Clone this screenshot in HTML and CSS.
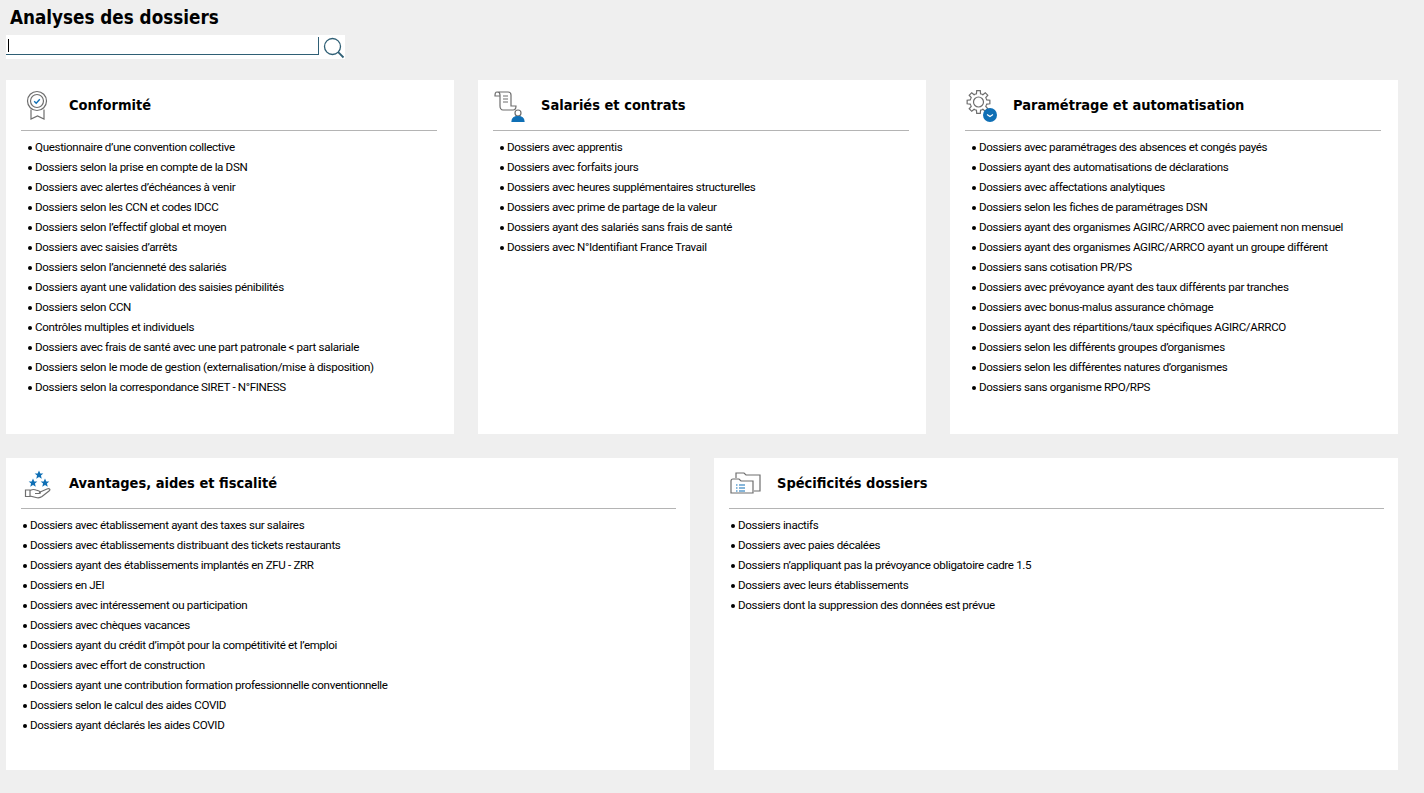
FILE: index.html
```html
<!DOCTYPE html>
<html lang="fr">
<head>
<meta charset="utf-8">
<title>Analyses des dossiers</title>
<link rel="stylesheet" href="styles.css">
</head>
<body>
<h1 class="page-title">Analyses des dossiers</h1>
<div class="search">
  <div class="search-input"><span class="caret"></span></div>
  <svg class="search-icon" width="22" height="22" viewBox="0 0 22 22" fill="none" stroke="#2f5f75"><circle cx="9.500" cy="9.500" r="8" stroke-width="1.300"/><path d="M15.200 15.200 20.500 20.500" stroke-width="1.800"/></svg>
</div>
<main class="board">
  <div class="row row-top">
    <section class="card">
      <header class="card-head">
        <svg class="icon" width="36" height="36" viewBox="0 0 36 36" fill="none" stroke="#6e6e6e" stroke-width="1.200"><circle cx="16" cy="14" r="9.500"/><circle cx="16" cy="14" r="6.500"/><path d="M13.200 14.200 15.200 16.200 18.800 12.200" stroke="#0f6fb5" stroke-width="1.400"/><path d="M10 22.500V32L16.500 29 23 32V22.500"/></svg>
        <h2>Conformité</h2>
      </header>
      <ul class="list">
        <li>Questionnaire d’une convention collective</li>
        <li>Dossiers selon la prise en compte de la DSN</li>
        <li>Dossiers avec alertes d’échéances à venir</li>
        <li>Dossiers selon les CCN et codes IDCC</li>
        <li>Dossiers selon l’effectif global et moyen</li>
        <li>Dossiers avec saisies d’arrêts</li>
        <li>Dossiers selon l’ancienneté des salariés</li>
        <li>Dossiers ayant une validation des saisies pénibilités</li>
        <li>Dossiers selon CCN</li>
        <li>Contrôles multiples et individuels</li>
        <li>Dossiers avec frais de santé avec une part patronale &lt; part salariale</li>
        <li>Dossiers selon le mode de gestion (externalisation/mise à disposition)</li>
        <li>Dossiers selon la correspondance SIRET - N°FINESS</li>
      </ul>
    </section>
    <section class="card">
      <header class="card-head">
        <svg class="icon" width="36" height="36" viewBox="0 0 36 36" fill="none" stroke="#6e6e6e" stroke-width="1.200"><path d="M4 5H15C17 5 18 6 18 8V19H23C23 21 22 23 20 23H10C8 23 7 21 7 19V8C7 6 6 5 4 5 2.500 5 2 6.500 2 9H7"/><path d="M10 9H15M10 12H15M10 15H15"/><circle cx="25" cy="26" r="3"/><path d="M19 34.500C19 31 21 29.500 25 29.500S31 31 31 34.500Z" fill="#0f6fb5" stroke="#0f6fb5"/></svg>
        <h2>Salariés et contrats</h2>
      </header>
      <ul class="list">
        <li>Dossiers avec apprentis</li>
        <li>Dossiers avec forfaits jours</li>
        <li>Dossiers avec heures supplémentaires structurelles</li>
        <li>Dossiers avec prime de partage de la valeur</li>
        <li>Dossiers ayant des salariés sans frais de santé</li>
        <li>Dossiers avec N°Identifiant France Travail</li>
      </ul>
    </section>
    <section class="card">
      <header class="card-head">
        <svg class="icon" width="36" height="36" viewBox="0 0 36 36" fill="none" stroke="#6e6e6e" stroke-width="1.200">
          <g transform="translate(13.500 15)">
            <path d="M-3.250-7.850-2.060-8.250-1.800-11.360H1.800L2.060-8.250 3.250-7.850"/>
            <path transform="rotate(45)" d="M-3.250-7.850-2.060-8.250-1.800-11.360H1.800L2.060-8.250 3.250-7.850"/>
            <path transform="rotate(90)" d="M-3.250-7.850-2.060-8.250-1.800-11.360H1.800L2.060-8.250 3.250-7.850"/>
            <path transform="rotate(135)" d="M-3.250-7.850-2.060-8.250-1.800-11.360H1.800L2.060-8.250 3.250-7.850"/>
            <path transform="rotate(180)" d="M-3.250-7.850-2.060-8.250-1.800-11.360H1.800L2.060-8.250 3.250-7.850"/>
            <path transform="rotate(225)" d="M-3.250-7.850-2.060-8.250-1.800-11.360H1.800L2.060-8.250 3.250-7.850"/>
            <path transform="rotate(270)" d="M-3.250-7.850-2.060-8.250-1.800-11.360H1.800L2.060-8.250 3.250-7.850"/>
            <path transform="rotate(315)" d="M-3.250-7.850-2.060-8.250-1.800-11.360H1.800L2.060-8.250 3.250-7.850"/>
            <circle r="5"/>
          </g>
          <circle cx="25" cy="28" r="7" fill="#0f6fb5" stroke="none"/>
          <path d="M22 27.500 25 29.500 28 27.500" stroke="#fff" stroke-width="1.200"/>
        </svg>
        <h2>Paramétrage et automatisation</h2>
      </header>
      <ul class="list">
        <li>Dossiers avec paramétrages des absences et congés payés</li>
        <li>Dossiers ayant des automatisations de déclarations</li>
        <li>Dossiers avec affectations analytiques</li>
        <li>Dossiers selon les fiches de paramétrages DSN</li>
        <li>Dossiers ayant des organismes AGIRC/ARRCO avec paiement non mensuel</li>
        <li>Dossiers ayant des organismes AGIRC/ARRCO ayant un groupe différent</li>
        <li>Dossiers sans cotisation PR/PS</li>
        <li>Dossiers avec prévoyance ayant des taux différents par tranches</li>
        <li>Dossiers avec bonus-malus assurance chômage</li>
        <li>Dossiers ayant des répartitions/taux spécifiques AGIRC/ARRCO</li>
        <li>Dossiers selon les différents groupes d’organismes</li>
        <li>Dossiers selon les différentes natures d’organismes</li>
        <li>Dossiers sans organisme RPO/RPS</li>
      </ul>
    </section>
  </div>
  <div class="row row-bottom">
    <section class="card">
      <header class="card-head">
        <svg class="icon" width="36" height="36" viewBox="0 0 36 36" fill="none" stroke="#6e6e6e" stroke-width="1.200">
          <path transform="translate(18 10) scale(1.200)" fill="#0f6fb5" stroke="none" d="M0-3.800 1.100-1.200 3.600-1.200 1.600.5 2.300 3.100 0 1.600-2.300 3.100-1.600.5-3.600-1.200-1.100-1.200Z"/>
          <path transform="translate(12 18) scale(1.200)" fill="#0f6fb5" stroke="none" d="M0-3.800 1.100-1.200 3.600-1.200 1.600.5 2.300 3.100 0 1.600-2.300 3.100-1.600.5-3.600-1.200-1.100-1.200Z"/>
          <path transform="translate(24 18) scale(1.200)" fill="#0f6fb5" stroke="none" d="M0-3.800 1.100-1.200 3.600-1.200 1.600.5 2.300 3.100 0 1.600-2.300 3.100-1.600.5-3.600-1.200-1.100-1.200Z"/>
          <path d="M4.500 25H9V31.500H4.500ZM9 25.500C11 24.500 13 24 15 25L18 26C20 26.500 20 28.500 18 28.500H14M18 27.500 26 24C28.500 23 30 24.500 28 26L21 31.500C19 33 17 33 15 32.500L9 31"/>
        </svg>
        <h2>Avantages, aides et fiscalité</h2>
      </header>
      <ul class="list">
        <li>Dossiers avec établissement ayant des taxes sur salaires</li>
        <li>Dossiers avec établissements distribuant des tickets restaurants</li>
        <li>Dossiers ayant des établissements implantés en ZFU - ZRR</li>
        <li>Dossiers en JEI</li>
        <li>Dossiers avec intéressement ou participation</li>
        <li>Dossiers avec chèques vacances</li>
        <li>Dossiers ayant du crédit d’impôt pour la compétitivité et l’emploi</li>
        <li>Dossiers avec effort de construction</li>
        <li>Dossiers ayant une contribution formation professionnelle conventionnelle</li>
        <li>Dossiers selon le calcul des aides COVID</li>
        <li>Dossiers ayant déclarés les aides COVID</li>
      </ul>
    </section>
    <section class="card">
      <header class="card-head">
        <svg class="icon" width="36" height="36" viewBox="0 0 36 36" fill="none" stroke="#6e6e6e" stroke-width="1.200"><path d="M7 13V8H15L17 10H31V26H25"/><path d="M2 28V16C2 15 3 14 4 14H10L12 16H24V28Z"/><path d="M7 20H8.500M7 23H8.500M7 26H8.500M10 20H16M10 23H16M10 26H16" stroke="#0f6fb5"/></svg>
        <h2>Spécificités dossiers</h2>
      </header>
      <ul class="list">
        <li>Dossiers inactifs</li>
        <li>Dossiers avec paies décalées</li>
        <li>Dossiers n’appliquant pas la prévoyance obligatoire cadre 1.5</li>
        <li>Dossiers avec leurs établissements</li>
        <li>Dossiers dont la suppression des données est prévue</li>
      </ul>
    </section>
  </div>
</main>
</body>
</html>
```
FILE: styles.css
```css
* { box-sizing: border-box; }
html, body { height: 100%; }
body {
  margin: 0;
  padding: 7px 26px 0 6px;
  background: #efefef;
  color: #000;
  font-family: "Liberation Sans", Arial, sans-serif;
  overflow: hidden;
}
.page-title {
  margin: 0 0 7px 4px;
  font-family: "DejaVu Sans", sans-serif;
  font-stretch: condensed;
  font-size: 18.700px;
  font-weight: 700;
  line-height: 21px;
}
.search {
  display: flex;
  align-items: flex-start;
  width: 339px;
  height: 24px;
  padding-top: 2px;
  background: #fff;
}
.search-input {
  width: 313px;
  height: 18px;
  border-right: 1px solid #2f5f75;
  border-bottom: 1px solid #2f5f75;
  padding: 2px 0 0 2px;
}
.caret { display: block; width: 1px; height: 13px; background: #000; }
.search-icon { margin: 0 0 0 4px; }
.board { display: flex; flex-direction: column; gap: 24px; margin-top: 21px; }
.row { display: flex; gap: 24px; }
.row-top { height: 354px; }
.row-bottom { height: 312px; }
.card { flex: 1 1 0; min-width: 0; background: #fff; padding: 0 17px 0 15px; }
.row-bottom .card { padding-right: 14px; }
.card-head {
  display: flex;
  align-items: center;
  height: 51px;
  border-bottom: 1px solid #b4b4b4;
}
.icon { flex: none; margin: 0 12px 0 0; }
.card-head h2 {
  margin: 0;
  font-family: "DejaVu Sans", sans-serif;
  font-stretch: condensed;
  font-size: 14.500px;
  font-weight: 700;
  line-height: 18px;
}
.list {
  margin: 6px 0 0;
  padding: 0 0 0 7px;
  list-style: none;
  font-family: Roboto, "Liberation Sans", sans-serif;
  font-size: 11.600px;
  letter-spacing: -0.34px;
  line-height: 20px;
}
.row-bottom .list { padding-left: 2px; }
.list li { display: flex; align-items: center; white-space: nowrap; }
.list li::before {
  content: "";
  flex: none;
  width: 4px;
  height: 4px;
  margin-right: 3px;
  margin-top: 2px;
  border-radius: 50%;
  background: #000;
}
```
